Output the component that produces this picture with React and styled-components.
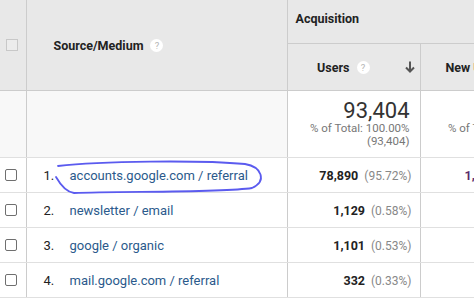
import React from 'react';
import styled, { createGlobalStyle } from 'styled-components';

const GlobalStyle = createGlobalStyle`
  html, body {
    margin: 0;
    padding: 0;
    background: #ffffff;
    overflow: hidden;
  }
  body {
    font-family: Roboto, Arial, sans-serif;
  }
`;

const Frame = styled.div`
  position: relative;
  width: 474px;
  height: 299px;
  overflow: hidden;
`;

const Table = styled.table`
  width: 560px;
  border-collapse: collapse;
  table-layout: fixed;
  font-family: Roboto, Arial, sans-serif;
`;

const HeadCell = styled.th`
  background: #e8e8e8;
  border: 1px solid #cccccc;
  border-top: none;
  height: ${(p) => p.h || 43}px;
  padding: 0;
  font-size: 12.5px;
  font-weight: 700;
  color: #222;
  text-align: left;
  vertical-align: middle;
  &:first-child {
    border-left: none;
  }
`;

const HeadInner = styled.div`
  display: flex;
  align-items: center;
  justify-content: ${(p) => p.justify || 'flex-start'};
  gap: 7px;
  padding: ${(p) => p.pad || '0'};
`;

const HelpIcon = styled.span`
  display: inline-flex;
  align-items: center;
  justify-content: center;
  width: 13px;
  height: 13px;
  border-radius: 50%;
  background: #fff;
  color: #b5b5b5;
  font-size: 9.5px;
  font-weight: 400;
`;

const SortArrow = styled.span`
  display: inline-flex;
  margin-left: 28px;
`;

const Box = styled.span`
  display: block;
  width: 12px;
  height: 12px;
  box-sizing: border-box;
  border: 1px solid ${(p) => (p.light ? '#c8c8c8' : '#6f6f6f')};
  border-radius: ${(p) => (p.light ? '0' : '2px')};
  background: ${(p) => (p.light ? '#ececec' : '#fff')};
  margin-left: ${(p) => (p.light ? '6px' : '5px')};
`;

const Cell = styled.td`
  border: 1px solid #cccccc;
  border-top: 1px solid #e0e0e0;
  border-bottom: 1px solid #e0e0e0;
  height: ${(p) => p.h || 34}px;
  padding: 0;
  background: ${(p) => p.bg || '#fff'};
  vertical-align: middle;
  &:first-child {
    border-left: none;
  }
`;

const TotalBlock = styled.div`
  padding-right: ${(p) => p.right || 10}px;
  text-align: right;
  white-space: nowrap;
`;

const BigNum = styled.div`
  font-size: 22px;
  color: #333;
  line-height: 20px;
  margin-bottom: 1px;
`;

const SubNum = styled.div`
  font-size: 11.5px;
  color: #777;
  line-height: 12.5px;
`;

const Source = styled.div`
  display: flex;
  align-items: center;
  font-size: 13px;
  padding-left: 17px;
`;

const Index = styled.span`
  width: 26px;
  color: #222;
`;

const Link = styled.span`
  color: #2b5a8c;
`;

const Metric = styled.div`
  font-size: 12.5px;
  padding-right: ${(p) => p.right || 8}px;
  text-align: right;
  color: #222;
  white-space: nowrap;
  b {
    font-weight: 700;
  }
  span {
    color: #888;
    margin-left: 6px;
    font-size: 12px;
  }
`;

const Oval = styled.svg`
  position: absolute;
  left: 0;
  top: 0;
  pointer-events: none;
`;

const rows = [
  { source: 'accounts.google.com / referral', users: '78,890', pct: '(95.72%)', nu: '1,047', nuPct: '(96.36%)', nuColor: '#5a2a6a' },
  { source: 'newsletter / email', users: '1,129', pct: '(0.58%)', nu: '10', nuPct: '(0.7%)', nuColor: '#222' },
  { source: 'google / organic', users: '1,101', pct: '(0.53%)', nu: '13', nuPct: '(0.9%)', nuColor: '#222' },
  { source: 'mail.google.com / referral', users: '332', pct: '(0.33%)', nu: '', nuPct: '', nuColor: '#222' },
];

const App = () => {
  return (
    <Frame>
      <GlobalStyle />
      <Table>
        <colgroup>
          <col style={{ width: 26 }} />
          <col style={{ width: 261 }} />
          <col style={{ width: 133 }} />
          <col style={{ width: 140 }} />
        </colgroup>
        <thead>
          <tr>
            <HeadCell rowSpan={2} h={90}>
              <Box light />
            </HeadCell>
            <HeadCell rowSpan={2} h={90}>
              <HeadInner pad="0 0 0 27px">
                Source/Medium <HelpIcon>?</HelpIcon>
              </HeadInner>
            </HeadCell>
            <HeadCell colSpan={2} h={43}>
              <HeadInner pad="0 0 6px 8px">Acquisition</HeadInner>
            </HeadCell>
          </tr>
          <tr>
            <HeadCell h={46}>
              <HeadInner justify="flex-end" pad="0 5px 0 0">
                Users <HelpIcon>?</HelpIcon>
                <SortArrow>
                  <svg width="10" height="12" viewBox="0 0 10 12">
                    <path d="M5 0.5 V10.5 M1 6.5 L5 10.5 L9 6.5" stroke="#555" strokeWidth="2" fill="none" />
                  </svg>
                </SortArrow>
              </HeadInner>
            </HeadCell>
            <HeadCell h={46}>
              <HeadInner pad="0 0 0 25px">New Users</HeadInner>
            </HeadCell>
          </tr>
        </thead>
        <tbody>
          <tr>
            <Cell bg="#f8f8f8" h={66} />
            <Cell bg="#f8f8f8" h={66} />
            <Cell h={66}>
              <TotalBlock>
                <BigNum>93,404</BigNum>
                <SubNum>% of Total: 100.00%</SubNum>
                <SubNum>(93,404)</SubNum>
              </TotalBlock>
            </Cell>
            <Cell h={66}>
              <TotalBlock right={12}>
                <BigNum>988</BigNum>
                <SubNum>% of Total: 100.00%</SubNum>
                <SubNum>(988)</SubNum>
              </TotalBlock>
            </Cell>
          </tr>
          {rows.map((r, i) => (
            <tr key={i}>
              <Cell>
                <Box />
              </Cell>
              <Cell>
                <Source>
                  <Index>{i + 1}.</Index>
                  <Link>{r.source}</Link>
                </Source>
              </Cell>
              <Cell>
                <Metric>
                  <b>{r.users}</b>
                  <span>{r.pct}</span>
                </Metric>
              </Cell>
              <Cell>
                <Metric right={10}>
                  <b style={{ color: r.nuColor }}>{r.nu}</b>
                  {r.nuPct && <span>{r.nuPct}</span>}
                </Metric>
              </Cell>
            </tr>
          ))}
        </tbody>
      </Table>
      <Oval width="474" height="299">
        <path
          d="M58 166 C100 161 200 160 245 164 C262 167 267 181 252 188 C220 193 120 191 74 193 C66 192 60 184 56 177"
          stroke="#5b5bef"
          strokeWidth="1.8"
          fill="none"
          strokeLinecap="round"
        />
      </Oval>
    </Frame>
  );
};

export default App;
